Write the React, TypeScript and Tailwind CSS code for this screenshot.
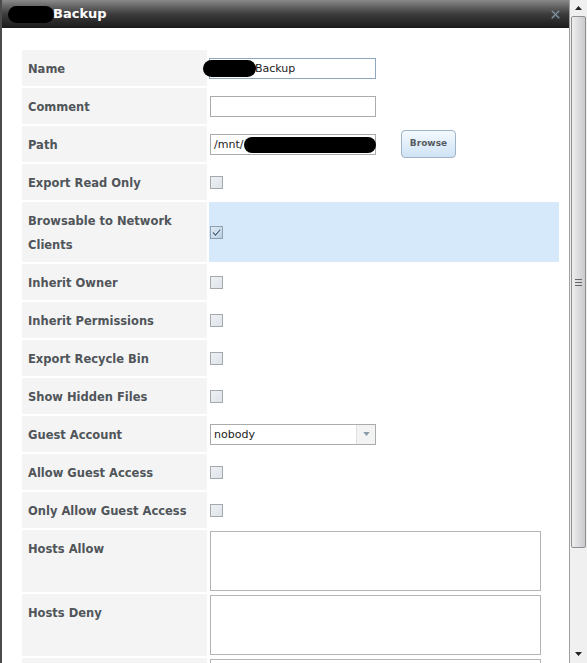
import React from 'react';

const font = { fontFamily: '"DejaVu Sans", Verdana, sans-serif' };

function Checkbox({ checked = false }: { checked?: boolean }) {
  return (
    <span
      className={`inline-block w-[13px] h-[13px] border relative ${
        checked
          ? 'border-[#8ea2b4] bg-gradient-to-br from-[#dfeaf4] to-[#b9cde0]'
          : 'border-[#a4a9ae] bg-gradient-to-br from-[#eef1f4] to-[#dde3ea]'
      }`}
    >
      {checked && (
        <svg viewBox="0 0 11 11" className="absolute inset-0 w-[11px] h-[11px]">
          <path d="M2 5.6 L4.5 8.2 L9.3 2.6" fill="none" stroke="#f4f8fb" strokeWidth="2.6" />
          <path d="M2 5.6 L4.5 8.2 L9.3 2.6" fill="none" stroke="#44698c" strokeWidth="1.4" />
        </svg>
      )}
    </span>
  );
}

function Row({
  label,
  children,
  h = 'h-[36px]',
  highlight = false,
  top = false,
}: {
  label: React.ReactNode;
  children?: React.ReactNode;
  h?: string;
  highlight?: boolean;
  top?: boolean;
}) {
  return (
    <div className={`flex gap-[2px] ${h}`}>
      <div className="w-[185px] shrink-0 bg-[#f4f4f4] pl-[6px] pt-[7px] text-[11.5px] font-bold leading-[24px] text-[#50555a]">
        {label}
      </div>
      <div
        className={`flex-1 flex ${top ? 'items-start pt-[1px]' : 'items-center'} pl-[1px] ${
          highlight ? 'bg-[#d6e9fb]' : 'bg-white'
        }`}
      >
        {children}
      </div>
    </div>
  );
}

function TextBox({ children, focused = false }: { children?: React.ReactNode; focused?: boolean }) {
  return (
    <div
      className={`relative h-[21px] border bg-white px-[3px] text-[11px] leading-[19px] text-[#222] ${
        focused ? 'border-[#8ea7bf] -ml-[1px] w-[167px]' : 'border-[#a9acaf] w-[166px]'
      }`}
    >
      {children}
    </div>
  );
}

export default function App() {
  return (
    <div className="flex h-[663px] w-[587px] overflow-hidden bg-white" style={font}>
      <div className="flex-1 flex flex-col border-l-2 border-[#4b4b4b]">
        <div className="h-[28px] shrink-0 flex items-center justify-between bg-gradient-to-b from-[#8a8a8a] via-[#3d3d3d] to-[#1b1b1b] pl-[6px] pr-[8px]">
          <div className="flex items-center">
            <span className="inline-block w-[46px] h-[17px] rounded-full bg-black -mr-[1px]" />
            <span className="text-[13px] font-bold text-white">Backup</span>
          </div>
          <svg viewBox="0 0 12 12" className="w-[11px] h-[11px]">
            <path d="M2 2 L10 10 M10 2 L2 10" stroke="#5d6b76" strokeWidth="2.4" />
            <path d="M2 2 L10 10 M10 2 L2 10" stroke="#8e9aa4" strokeWidth="0.9" />
          </svg>
        </div>
        <div className="flex-1 overflow-hidden pt-[22px] pl-[20px] pr-[10px]">
          <div className="flex flex-col gap-[2px]">
            <Row label="Name">
              <TextBox focused>
                <span className="absolute -left-[7px] top-[1px] w-[53px] h-[17px] rounded-full bg-black" />
                <span className="pl-[42px]">Backup</span>
              </TextBox>
            </Row>
            <Row label="Comment">
              <TextBox />
            </Row>
            <Row label="Path">
              <TextBox>
                /mnt/
                <span className="absolute left-[33px] -right-[1px] top-[2px] h-[16px] rounded-full bg-black" />
              </TextBox>
              <button className="ml-[25px] w-[55px] h-[28px] rounded-[4px] border border-[#9fb4c6] bg-gradient-to-b from-[#f4f9fe] to-[#cfe3f5] text-[9px] font-bold text-[#555b61]">
                Browse
              </button>
            </Row>
            <Row label="Export Read Only">
              <Checkbox />
            </Row>
            <Row label={<>Browsable to Network<br />Clients</>} h="h-[60px]" highlight>
              <Checkbox checked />
            </Row>
            <Row label="Inherit Owner">
              <Checkbox />
            </Row>
            <Row label="Inherit Permissions">
              <Checkbox />
            </Row>
            <Row label="Export Recycle Bin">
              <Checkbox />
            </Row>
            <Row label="Show Hidden Files">
              <Checkbox />
            </Row>
            <Row label="Guest Account">
              <div className="flex w-[166px] h-[21px] border border-[#a9acaf] bg-white">
                <span className="flex-1 px-[3px] text-[11px] leading-[19px] text-[#222]">nobody</span>
                <span className="w-[19px] flex items-center justify-center border-l border-[#e0e0e0] bg-[#f3f3f3]">
                  <svg viewBox="0 0 8 5" className="w-[7px] h-[4px]">
                    <path d="M0 0 L8 0 L4 5 Z" fill="#8a9aa6" />
                  </svg>
                </span>
              </div>
            </Row>
            <Row label="Allow Guest Access">
              <Checkbox />
            </Row>
            <Row label="Only Allow Guest Access">
              <Checkbox />
            </Row>
            <Row label="Hosts Allow" h="h-[62px]" top>
              <div className="w-[331px] h-[60px] border border-[#b4b4b4] bg-white" />
            </Row>
            <Row label="Hosts Deny" h="h-[62px]" top>
              <div className="w-[331px] h-[60px] border border-[#b4b4b4] bg-white" />
            </Row>
            <Row label="" h="h-[40px]" top>
              <div className="w-[331px] h-[40px] border border-[#b4b4b4] bg-white" />
            </Row>
          </div>
        </div>
      </div>
      <div className="w-[18px] shrink-0 flex flex-col border-l border-[#a0a0a0] bg-[#f0f0f0]">
        <div className="h-[16px] flex items-center justify-center">
          <svg viewBox="0 0 7 4" className="w-[7px] h-[4px]">
            <path d="M0 4 L7 4 L3.5 0 Z" fill="#222" />
          </svg>
        </div>
        <div className="h-[532px] mx-[1px] rounded-[2px] border border-[#8f8f8f] bg-gradient-to-r from-[#eeeeee] via-[#dcdcdf] to-[#c9cace] flex items-center justify-center">
          <div className="flex flex-col gap-[2px]">
            <span className="block w-[7px] h-px bg-[#666]" />
            <span className="block w-[7px] h-px bg-[#666]" />
            <span className="block w-[7px] h-px bg-[#666]" />
          </div>
        </div>
        <div className="flex-1" />
        <div className="h-[18px] flex items-center justify-center">
          <svg viewBox="0 0 7 4" className="w-[7px] h-[4px]">
            <path d="M0 0 L7 0 L3.5 4 Z" fill="#222" />
          </svg>
        </div>
      </div>
    </div>
  );
}
